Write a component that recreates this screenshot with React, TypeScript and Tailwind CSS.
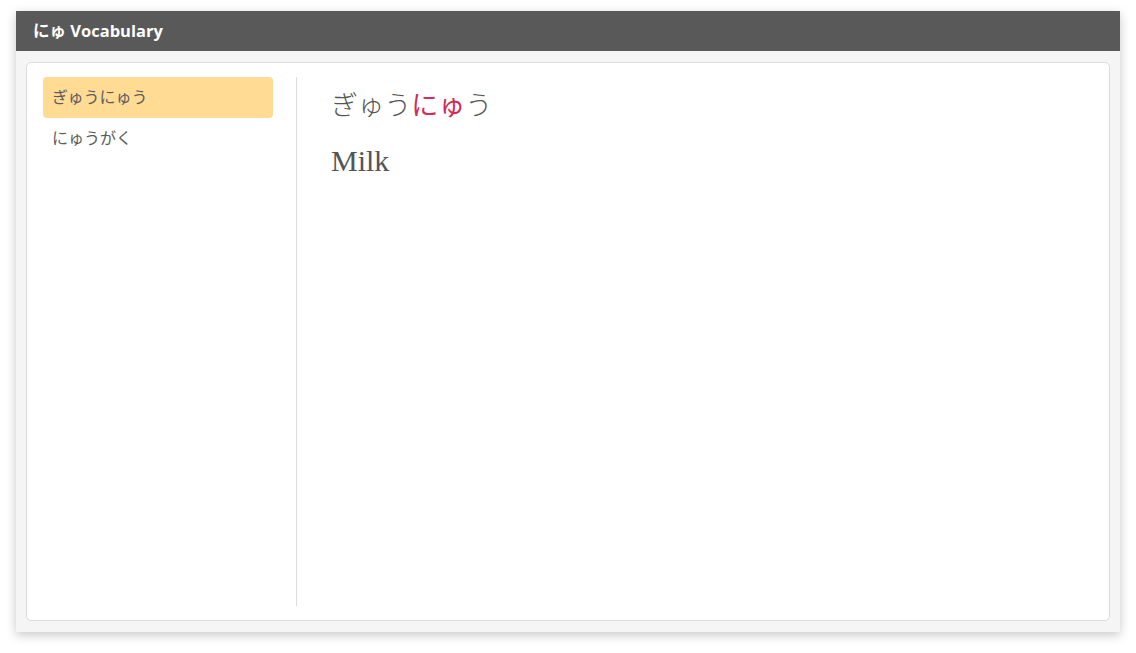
import React from "react";

export default function App() {
  const items = ["ぎゅうにゅう", "にゅうがく"];
  return (
    <div className="h-[653px] w-[1136px] bg-white pt-[11px] px-4 overflow-hidden">
      <div className="h-[621px] flex flex-col shadow-[0_3px_10px_rgba(0,0,0,0.22)]">
        <div
          className="h-10 shrink-0 bg-[#595959] flex items-center px-[17px] text-white font-bold text-[16.5px]"
          style={{ fontFamily: '"Open Sans", "Noto Sans CJK JP", sans-serif' }}
        >
          にゅ Vocabulary
        </div>
        <div className="flex-1 bg-[#f5f5f5] px-[10px] py-[11px] min-h-0">
          <div className="h-full bg-white border border-[#dddddd] rounded-[5px] flex px-4 py-[14px]">
            <div className="w-[254px] shrink-0 border-r border-[#dddddd] pr-[23px]">
              {items.map((t, i) => (
                <div
                  key={t}
                  className={
                    "h-[41px] flex items-center pl-[9px] pb-[3px] rounded-[4px] text-[16px] text-[#5c5c5c] font-normal " +
                    (i === 0 ? "bg-[#ffdb94]" : "")
                  }
                  style={{ fontFamily: '"Noto Sans CJK JP", sans-serif' }}
                >
                  {t}
                </div>
              ))}
            </div>
            <div className="pl-[34px] flex-1">
              <div
                className="mt-[10px] text-[27px] leading-[34px] text-[#555555] font-light"
                style={{ fontFamily: '"Noto Sans CJK JP", serif' }}
              >
                ぎゅう<span className="text-[#d42a55] font-normal">にゅ</span>う
              </div>
              <div
                className="mt-[22px] text-[30px] leading-[36px] text-[#555555]"
                style={{ fontFamily: '"Liberation Serif", serif' }}
              >
                Milk
              </div>
            </div>
          </div>
        </div>
      </div>
    </div>
  );
}
